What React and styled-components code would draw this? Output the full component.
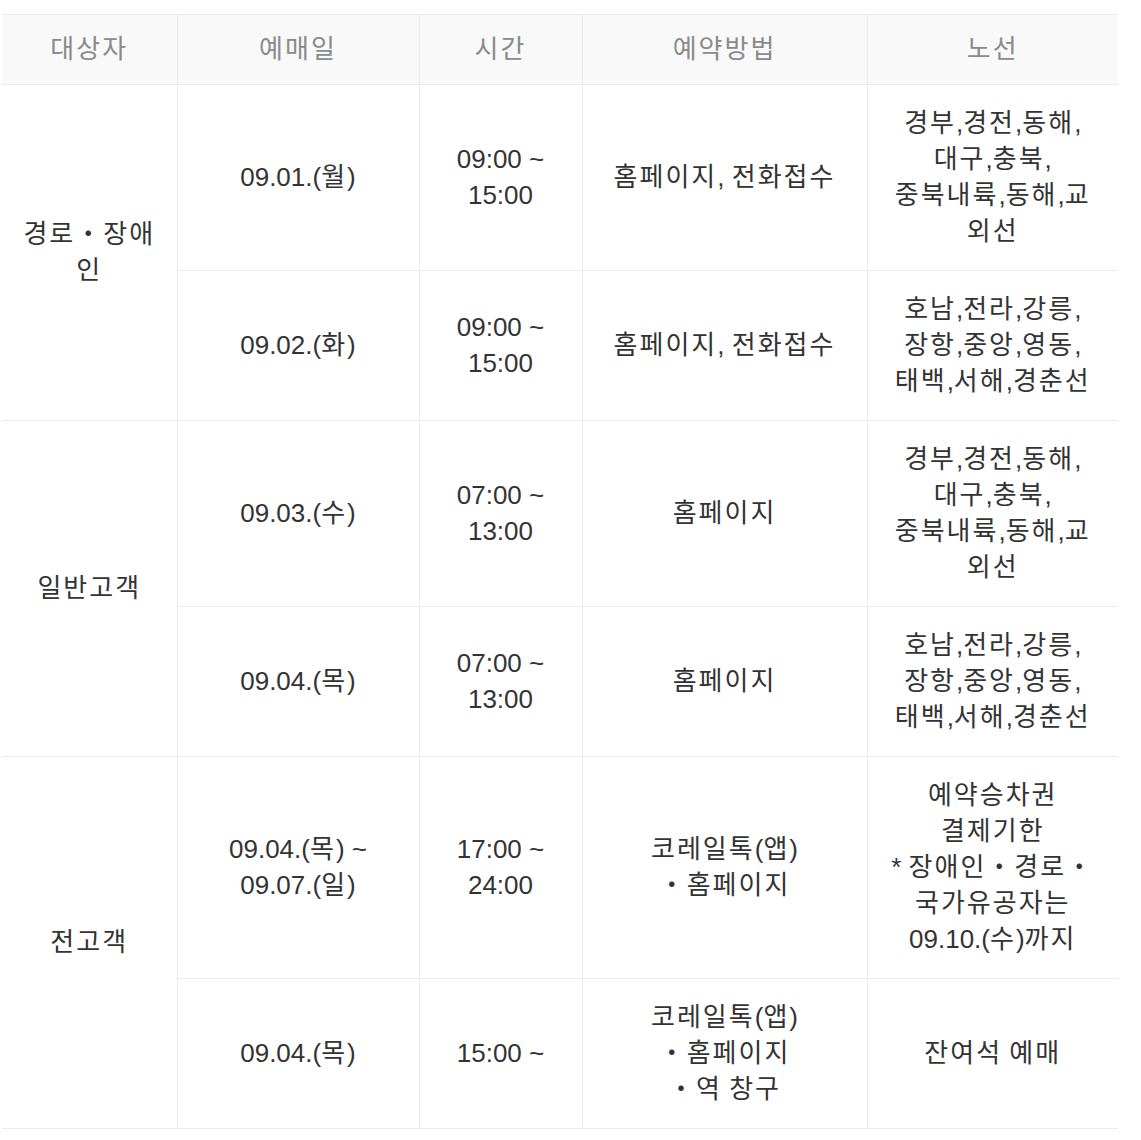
import React from 'react';
import styled, { createGlobalStyle } from 'styled-components';

const GlobalStyle = createGlobalStyle`
	body {
		margin: 0;
		background: #ffffff;
		font-family: "Liberation Sans", "Noto Sans CJK KR", sans-serif;
	}
`;

const Page = styled.div`
	padding: 14px 23px 10px 2px;
`;

const Table = styled.table`
	width: 1116px;
	border-collapse: collapse;
	table-layout: fixed;
	border-top: 1px solid #ebebeb;
	border-bottom: 1px solid #ebebeb;
	font-size: 26px;
	line-height: 36px;
	text-align: center;
`;

const Th = styled.th`
	background: #f9f9f9;
	color: #8a8a8a;
	font-weight: 400;
	padding: 16px 10px 17px;
	border-bottom: 1px solid #ebebeb;
	border-left: ${(p) => (p.$first ? 'none' : '1px solid #ebebeb')};
`;

const Td = styled.td`
	color: #333333;
	padding: 20px 10px 21px;
	vertical-align: middle;
	white-space: nowrap;
	border-top: 1px solid #ebebeb;
	border-left: ${(p) => (p.$first ? 'none' : '1px solid #ebebeb')};
`;

// hangul in the original renders a touch wider than Noto CJK
const Ko = styled.span`
	letter-spacing: 2px;
`;

const widths = [175, 242, 163, 285, 251];
const headers = ['대상자', '예매일', '시간', '예약방법', '노선'];

const routesA = ['경부,경전,동해,', '대구,충북,', '중북내륙,동해,교', '외선'];
const routesB = ['호남,전라,강릉,', '장항,중앙,영동,', '태백,서해,경춘선'];

const groups = [
	{
		target: ['경로・장애', '인'],
		rows: [
			{ date: ['09.01.(월)'], time: ['09:00 ~', '15:00'], method: ['홈페이지, 전화접수'], route: routesA },
			{ date: ['09.02.(화)'], time: ['09:00 ~', '15:00'], method: ['홈페이지, 전화접수'], route: routesB },
		],
	},
	{
		target: ['일반고객'],
		rows: [
			{ date: ['09.03.(수)'], time: ['07:00 ~', '13:00'], method: ['홈페이지'], route: routesA },
			{ date: ['09.04.(목)'], time: ['07:00 ~', '13:00'], method: ['홈페이지'], route: routesB },
		],
	},
	{
		target: ['전고객'],
		rows: [
			{
				date: ['09.04.(목) ~', '09.07.(일)'],
				time: ['17:00 ~', '24:00'],
				method: ['코레일톡(앱)', '・홈페이지'],
				route: ['예약승차권', '결제기한', '* 장애인・경로・', '국가유공자는', '09.10.(수)까지'],
			},
			{
				date: ['09.04.(목)'],
				time: ['15:00 ~'],
				method: ['코레일톡(앱)', '・홈페이지', '・역 창구'],
				route: ['잔여석 예매'],
			},
		],
	},
];

const Text = ({ children }) =>
	children.split(/([\uAC00-\uD7A3・]+)/).map((part, i) =>
		/[\uAC00-\uD7A3・]/.test(part) ? <Ko key={i}>{part}</Ko> : part
	);

const Lines = ({ lines }) =>
	lines.map((line, i) => (
		<React.Fragment key={i}>
			{i > 0 && <br />}
			<Text>{line}</Text>
		</React.Fragment>
	));

export default function App() {
	return (
		<Page>
			<GlobalStyle />
			<Table>
				<colgroup>
					{widths.map((w, i) => (
						<col key={i} style={{ width: w }} />
					))}
				</colgroup>
				<thead>
					<tr>
						{headers.map((h, i) => (
							<Th key={h} $first={i === 0}><Text>{h}</Text></Th>
						))}
					</tr>
				</thead>
				<tbody>
					{groups.map((g, gi) =>
						g.rows.map((r, ri) => (
							<tr key={`${gi}-${ri}`}>
								{ri === 0 && (
									<Td $first rowSpan={g.rows.length}>
										<Lines lines={g.target} />
									</Td>
								)}
								<Td><Lines lines={r.date} /></Td>
								<Td><Lines lines={r.time} /></Td>
								<Td><Lines lines={r.method} /></Td>
								<Td><Lines lines={r.route} /></Td>
							</tr>
						))
					)}
				</tbody>
			</Table>
		</Page>
	);
}
